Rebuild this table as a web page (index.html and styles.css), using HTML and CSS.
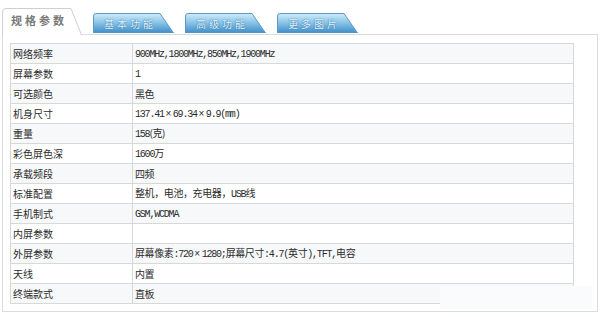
FILE: index.html
```html
<!DOCTYPE html>
<html lang="zh-CN">
<head>
<meta charset="utf-8">
<title>规格参数</title>
<link rel="stylesheet" href="styles.css">
</head>
<body>
<div class="page">
  <div class="tabs">
    <div class="tab tab-active">
      <svg class="tab-bg" width="80" height="27" viewBox="0 0 80 27">
        <path d="M0.5 27 V4 Q0.5 0.5 4 0.5 H69 L79.5 27" fill="#fff" stroke="#cfcfcf"/>
      </svg>
      <span class="tab-label">规格参数</span>
    </div>
    <div class="tab tab-blue">
      <svg class="tab-bg" width="81" height="20" viewBox="0 0 81 20">
        <defs>
          <linearGradient id="g1" x1="0" y1="0" x2="0" y2="1">
            <stop offset="0" stop-color="#d2ebf8"/>
            <stop offset="0.45" stop-color="#8cc6e8"/>
            <stop offset="1" stop-color="#3f8dc6"/>
          </linearGradient>
        </defs>
        <path d="M0.5 20 V3 Q0.5 0.5 3 0.5 H67 L80.5 20 Z" fill="url(#g1)" stroke="#5b9bc8"/>
      </svg>
      <span class="tab-label">基本功能</span>
    </div>
    <div class="tab tab-blue">
      <svg class="tab-bg" width="81" height="20" viewBox="0 0 81 20">
        <path d="M0.5 20 V3 Q0.5 0.5 3 0.5 H67 L80.5 20 Z" fill="url(#g1)" stroke="#5b9bc8"/>
      </svg>
      <span class="tab-label">高级功能</span>
    </div>
    <div class="tab tab-blue">
      <svg class="tab-bg" width="81" height="20" viewBox="0 0 81 20">
        <path d="M0.5 20 V3 Q0.5 0.5 3 0.5 H67 L80.5 20 Z" fill="url(#g1)" stroke="#5b9bc8"/>
      </svg>
      <span class="tab-label">更多图片</span>
    </div>
  </div>
  <div class="panel">
    <table class="spec">
      <tr><td class="k">网络频率</td><td class="v"><span class="n">900MHz,1800MHz,850MHz,1900MHz</span></td></tr>
      <tr><td class="k">屏幕参数</td><td class="v"><span class="n">1</span></td></tr>
      <tr><td class="k">可选颜色</td><td class="v">黑色</td></tr>
      <tr><td class="k">机身尺寸</td><td class="v"><span class="n">137.41</span><span class="x">×</span><span class="n">69.34</span><span class="x">×</span><span class="n">9.9(mm)</span></td></tr>
      <tr><td class="k">重量</td><td class="v"><span class="n">158</span>(克)</td></tr>
      <tr><td class="k">彩色屏色深</td><td class="v"><span class="n">1600</span>万</td></tr>
      <tr><td class="k">承载频段</td><td class="v">四频</td></tr>
      <tr><td class="k">标准配置</td><td class="v">整机，电池，充电器，<span class="n">USB</span>线</td></tr>
      <tr><td class="k">手机制式</td><td class="v"><span class="n">GSM,WCDMA</span></td></tr>
      <tr><td class="k">内屏参数</td><td class="v"></td></tr>
      <tr><td class="k">外屏参数</td><td class="v">屏幕像素<span class="n">:720</span><span class="x">×</span><span class="n">1280;</span>屏幕尺寸<span class="n">:4.7(</span>英寸<span class="n">),TFT,</span>电容</td></tr>
      <tr><td class="k">天线</td><td class="v">内置</td></tr>
      <tr><td class="k">终端款式</td><td class="v">直板</td></tr>
    </table>
    <div class="veil"></div>
  </div>
</div>
</body>
</html>
```

FILE: styles.css
```css
html, body {
  margin: 0;
  padding: 0;
  background: #fff;
}
body {
  font-family: "Noto Sans CJK SC", "Liberation Sans", sans-serif;
  color: #333;
}
.page {
  width: 600px;
  padding-top: 8px;
}
.tabs {
  display: flex;
  align-items: flex-end;
  gap: 11px;
  height: 26px;
  padding-left: 2px;
  position: relative;
  z-index: 2;
}
.tab {
  position: relative;
  display: flex;
  align-items: center;
}
.tab-bg {
  position: absolute;
  left: 0;
  top: 0;
  display: block;
}
.tab-active {
  width: 80px;
  height: 27px;
  margin-bottom: -1px;
}
.tab-active .tab-label {
  position: relative;
  padding-left: 9px;
  margin-top: -3px;
  font-size: 11px;
  font-weight: bold;
  letter-spacing: 3px;
  color: #7a7a7a;
}
.tab-blue {
  width: 81px;
  height: 20px;
  margin-bottom: 1px;
}
.tab-blue .tab-label {
  position: relative;
  padding-left: 11px;
  font-size: 10px;
  letter-spacing: 3px;
  color: #e8f5fc;
  text-shadow: 0 0 1px #2f78b2, 0 0 1px #2f78b2;
}
.panel {
  position: relative;
  margin: 0 2px;
  border: 1px solid #dcdcdc;
  padding: 8px 0 7px 7px;
}
.spec {
  width: 564px;
  border-collapse: collapse;
  border: 1px solid #d8d8d8;
  font-size: 10px;
}
.spec tr {
  height: 20px;
}
.spec tr:nth-child(odd) {
  background: #f7f8fa;
}
.spec td {
  border: 1px solid #d8d8d8;
  padding: 0 2px;
  vertical-align: middle;
  line-height: 12px;
}
.spec .k {
  width: 117px;
  color: #2b2b2b;
}
.spec .v {
  font-family: "Noto Sans CJK SC", sans-serif;
  letter-spacing: -0.4px;
  color: #2b2b2b;
}
.spec .n {
  font-family: "Liberation Mono", monospace;
  letter-spacing: -1.2px;
}
.spec .x {
  display: inline-block;
  width: 9px;
  text-align: center;
  font-family: "Liberation Sans", sans-serif;
  letter-spacing: 0;
}
.veil {
  position: absolute;
  left: 437px;
  top: 251px;
  width: 152px;
  height: 23px;
  background: #fafbfd;
}
```
